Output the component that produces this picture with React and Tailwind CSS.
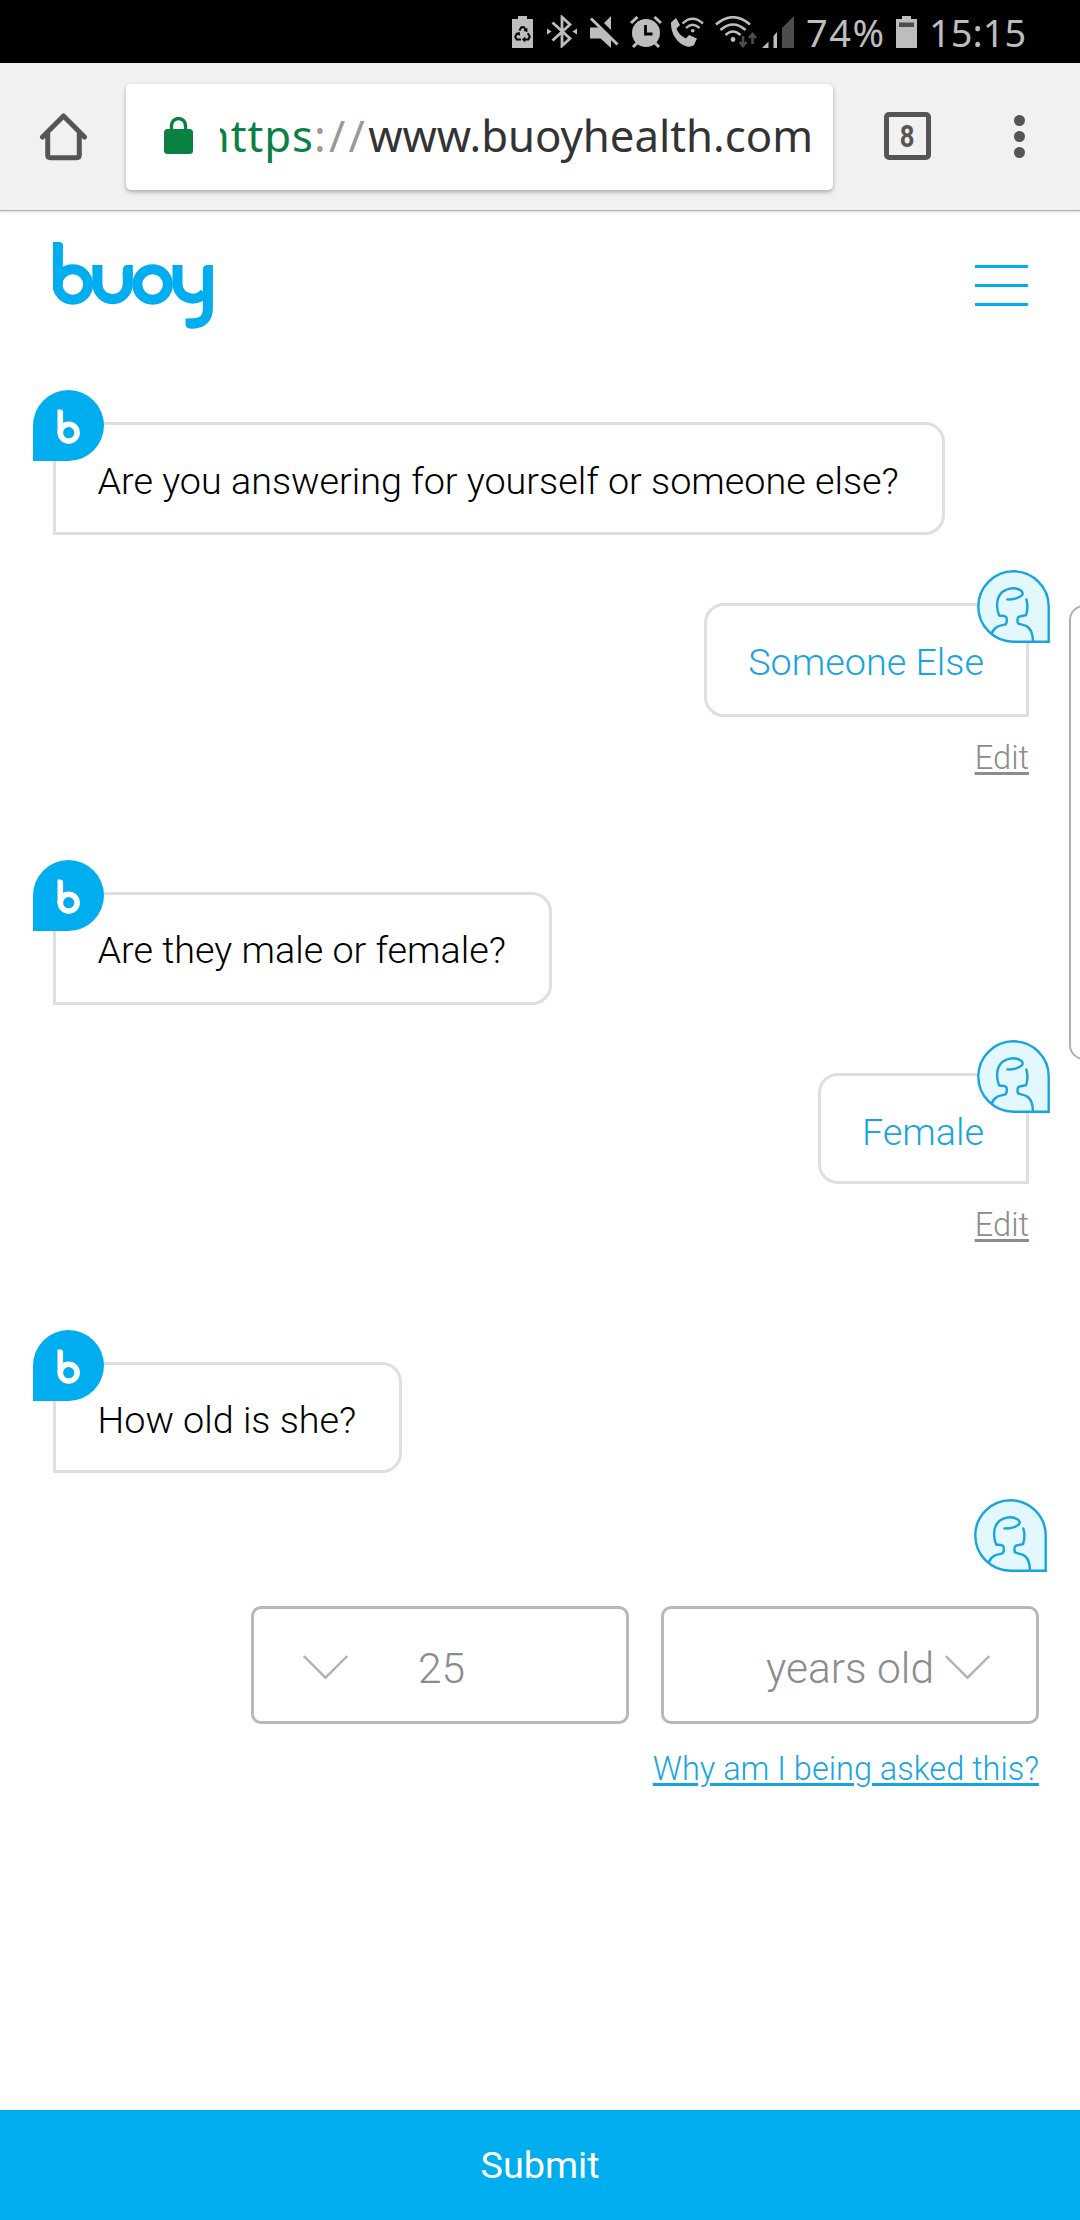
import React from "react";

const GREY = "#bdbdbd";

function BatterySaverIcon() {
  return (
    <svg className="ml-[512px] h-8 w-[21px] shrink-0" viewBox="0 0 21 32">
      <path d="M6 0h9v3h6v29H0V3h6z" fill={GREY} />
      <g fill="none" stroke="#000" strokeWidth="2">
        <path d="M7.4 14.5l2-3.2h2.6l2 3.2" />
        <path d="M15.8 17.2l2 3.6-1.5 2.7h-4" />
        <path d="M5.4 17l-2.2 3.8 1.5 2.7h4.2" />
      </g>
      <path d="M15.4 11.8v4.4l-4-1.6zM13.2 20.4v6l-3.2-3zM3 17.8l4.6-2 .6 4z" fill="#000" />
    </svg>
  );
}

function BluetoothIcon() {
  return (
    <svg className="ml-[14px] h-[33px] w-[30px] shrink-0" viewBox="0 0 30 33">
      <path d="M5.5 7.5L23 23.5l-8 7.3V2.2l8 7.3L5.5 25.5" fill="none" stroke={GREY} strokeWidth="2.8" />
      <path d="M0 13.5l4.6 3-4.6 3zM30 13.5l-4.6 3 4.6 3z" fill={GREY} />
    </svg>
  );
}

function MuteIcon() {
  return (
    <svg className="ml-[12px] h-8 w-[30px] shrink-0" viewBox="0 0 30 32">
      <path d="M1 11.5h8.5L22 23v9l-10.500-9.500H1zM22 0v14L15 7z" fill={GREY} />
      <path d="M2 2.500L28.500 28.500" stroke={GREY} strokeWidth="3" />
    </svg>
  );
}

function AlarmIcon() {
  return (
    <svg className="ml-[11px] h-8 w-8 shrink-0" viewBox="0 0 32 32">
      <circle cx="16" cy="17" r="14" fill={GREY} />
      <path d="M1 7l6.500-6M31 7L24.500 1M7 27l-4 4M25 27l4 4" stroke={GREY} strokeWidth="3" />
      <path d="M15.500 9v9h7" fill="none" stroke="#000" strokeWidth="2.800" />
    </svg>
  );
}

function WifiCallIcon() {
  return (
    <svg className="ml-[8px] h-8 w-[34px] shrink-0" viewBox="0 0 34 32">
      <path d="M1 6.500L6 2l4 7-3.500 3.500c1.500 4.500 5 8 9.500 10l3-3.500 8 3.500-3 6.500c-2 1.500-4.500 2-7 1.500C8 28 .5 18.500 1 6.500z" fill={GREY} />
      <path d="M12.500 7.500q10-9.500 20.500 0M16 12q6.500-6.500 13.500 0" fill="none" stroke={GREY} strokeWidth="2.400" />
      <circle cx="22.700" cy="14.800" r="1.800" fill={GREY} />
    </svg>
  );
}

function WifiIcon() {
  return (
    <svg className="ml-[11px] h-8 w-[43px] shrink-0" viewBox="0 0 43 32">
      <path d="M1 8.500q17-14.500 34 0M5.500 14q12.500-11 25 0M10.500 19q7.500-7 15 0" fill="none" stroke={GREY} strokeWidth="2.600" />
      <circle cx="18" cy="23.500" r="2.400" fill={GREY} />
      <path d="M28 20v10M24.500 26l3.500 4 3.500-4M37.500 28V18M34 22l3.500-4 3.500 4" fill="none" stroke="#4d4d4d" strokeWidth="2.600" />
    </svg>
  );
}

function SignalIcon() {
  return (
    <svg className="ml-[4px] h-8 w-8 shrink-0" viewBox="0 0 32 32">
      <path d="M0 32l6.500-6.500V32zM11.500 20l3.500-4v16h-3.500z" fill={GREY} />
      <path d="M20 12L32 0v32H20z" fill="#4d4d4d" />
    </svg>
  );
}

function BatteryIcon() {
  return (
    <svg className="h-8 w-[21px] shrink-0" viewBox="0 0 21 32">
      <path d="M6 0h9v3h6v29H0V3h6z" fill={GREY} />
      <path d="M3 6.500h15v4.500H3z" fill="#4d4d4d" />
    </svg>
  );
}

function StatusBar() {
  return (
    <div className="flex h-[63px] items-center bg-black font-['Noto_Sans',sans-serif] text-[38px] leading-none font-normal text-[#bdbdbd]">
      <BatterySaverIcon />
      <BluetoothIcon />
      <MuteIcon />
      <AlarmIcon />
      <WifiCallIcon />
      <WifiIcon />
      <SignalIcon />
      <span className="ml-[12px] w-[90px] shrink-0 tracking-[1.500px]">74%</span>
      <BatteryIcon />
      <span className="ml-[12px]">15:15</span>
    </div>
  );
}

function Toolbar() {
  return (
    <div className="flex h-[148px] border-b border-[#b0b0b0] bg-[#f1f1f1] pt-[21px] font-normal shadow-[0_1px_3px_rgba(0,0,0,0.15)]">
      <svg className="mt-[28px] ml-[39px] h-[49px] w-[49px] shrink-0" viewBox="0 0 49 49">
        <path d="M3.500 25L24.500 4l21 21M8.700 21v22q0 2.700 2.700 2.700h26.200q2.700 0 2.700-2.700V21" fill="none" stroke="#555" strokeWidth="5" strokeLinejoin="round" strokeLinecap="round" />
      </svg>
      <div className="ml-[38px] flex h-[106px] w-[707px] shrink-0 items-center rounded-[5px] bg-white pr-[20px] pb-1 shadow-[0_2px_4px_rgba(0,0,0,0.3)]">
        <svg className="ml-[38px] h-[38px] w-[29px] shrink-0" viewBox="0 0 29 38">
          <rect x="0" y="13" width="29" height="25" rx="3.500" fill="#0b8043" />
          <path d="M7.500 16V9.500a7 7 0 0 1 14 0V16" fill="none" stroke="#0b8043" strokeWidth="3.400" />
        </svg>
        <div className="ml-[27px] flex grow justify-end overflow-hidden font-['Noto_Sans',sans-serif] text-[43.7px] leading-[64px] whitespace-nowrap">
          <span className="tracking-[1px] text-[#0b8043]">https</span>
          <span className="tracking-[3.3px] text-[#999]">://</span>
          <span className="text-[#333]">www.buoyhealth.com</span>
        </div>
      </div>
      <div className="mt-[28px] ml-[51px] flex h-[48px] w-[47px] shrink-0 items-center justify-center rounded-[5px] border-[5px] border-[#555] font-['Roboto',sans-serif] text-[32px] leading-none font-bold text-[#555]">
        <span className="scale-x-[0.8]">8</span>
      </div>
      <div className="mt-[31px] ml-[83px] flex flex-col gap-[5px]">
        <span className="size-[11px] rounded-full bg-[#555]" />
        <span className="size-[11px] rounded-full bg-[#555]" />
        <span className="size-[11px] rounded-full bg-[#555]" />
      </div>
    </div>
  );
}

function BuoyLogo() {
  return (
    <svg className="mt-[31px] h-[87px] w-[160px]" viewBox="0 0 160 87" fill="none" stroke="#00aef0" strokeWidth="10">
      <circle cx="19.800" cy="42.500" r="15.300" />
      <path d="M4.900 42.500V5" />
      <path d="M0 0h6q4 0 4 4v4H0z" fill="#00aef0" stroke="none" />
      <path d="M44.400 23v19a15.200 15.200 0 0 0 30.400 0V30" />
      <path d="M69.800 34v-6q0-5 5-5h5v11z" fill="#00aef0" stroke="none" />
      <circle cx="99.600" cy="42.500" r="15.300" />
      <path d="M124.500 23v19a15.200 15.200 0 0 0 27 9M154.900 30v36q0 15.500-16 15.500h-2" />
      <path d="M149.900 34v-6q0-5 5-5h5v11zM132.500 76.500h10v10h-5q-5 0-5-5z" fill="#00aef0" stroke="none" />
    </svg>
  );
}

function BotAvatar() {
  return (
    <svg className="absolute -top-[35px] -left-[23px] size-[71px]" viewBox="0 0 71 71">
      <path d="M0 71V35.500A35.500 35.500 0 1 1 35.500 71z" fill="#00aef0" />
      <circle cx="35.700" cy="42.700" r="8.400" fill="none" stroke="#fff" strokeWidth="5.600" />
      <path d="M24.500 43V19.500h2.600q3 0 3 3V43z" fill="#fff" />
    </svg>
  );
}

function UserAvatar({ className }) {
  return (
    <svg className={className} viewBox="0 0 73 73" fill="none" stroke="#18a5df" strokeWidth="2.400" strokeLinecap="round">
      <path d="M71.700 71.700V36.500A35.200 35.200 0 1 0 36.500 71.700z" fill="#e3f7fe" />
      <path d="M30.300 29.400c5 .3 11-1 14.500-4 1.500-1.500 1-3.500-1-4.800-3.500-2.300-7-2.800-10.800-2C23.500 20.500 20 27 20.100 36c.1 3 .8 6.500 2 9.300 2.300 1 5-.2 7.200 1.800.8 2 .7 5-.6 7.200-1.700 1-5 .6-8 2.200-3 1.700-5 4-6 7" />
      <path d="M49.300 29.400c1.500 5 1.300 11-.2 15.800-2.500.8-6 .3-8 2.200-.8 2-.8 4.500.3 6.300 3 .9 6.500.8 9.500 3.300 3.500 3 5 8.500 5 14" />
    </svg>
  );
}

function BotMessage({ className, children }) {
  return (
    <div className={`relative ml-[53px] flex items-center self-start rounded-[20px] rounded-bl-none border-[3px] border-[#dfdfdf] pr-[43px] pl-[41.500px] text-black ${className}`}>
      <BotAvatar />
      {children}
    </div>
  );
}

function UserMessage({ className, children }) {
  return (
    <div className={`relative mr-[51px] flex items-center self-end rounded-[20px] rounded-br-none border-[3px] border-[#dfdfdf] pr-[42px] pl-[41px] text-[#18a5df] ${className}`}>
      {children}
      <UserAvatar className="absolute -top-[36px] -right-[24px] size-[73px]" />
    </div>
  );
}

function EditLink({ className }) {
  return (
    <a className={`mr-[51px] h-10 self-end text-[32.7px] leading-10 text-[#8c8c8c] underline decoration-[2.500px] underline-offset-[3px] ${className}`}>
      Edit
    </a>
  );
}

function Chevron({ className }) {
  return (
    <svg className={`h-[25px] w-[45px] shrink-0 ${className}`} viewBox="0 0 45 25" fill="none" stroke="#b3b3b3" strokeWidth="2.400">
      <path d="M.8 1l21.700 21.700L44.200 1" />
    </svg>
  );
}

export default function App() {
  return (
    <div className="relative flex h-[2220px] w-[1080px] flex-col overflow-hidden bg-white font-['Roboto',sans-serif] text-[37.75px] font-light">
      <StatusBar />
      <Toolbar />

      <header className="flex h-[171px] shrink-0 items-start justify-between pr-[52px] pl-[53px]">
        <BuoyLogo />
        <div className="mt-[54px] flex w-[53px] flex-col gap-[16px]">
          <span className="h-[3px] bg-[#00aef0]" />
          <span className="h-[3px] bg-[#00aef0]" />
          <span className="h-[3px] bg-[#00aef0]" />
        </div>
      </header>

      <main className="flex grow flex-col">
        <BotMessage className="mt-[40px] h-[113px] pt-[5px]">Are you answering for yourself or someone else?</BotMessage>
        <UserMessage className="mt-[68px] h-[114px] pt-[4px]">Someone Else</UserMessage>
        <EditLink className="mt-[21px]" />
        <BotMessage className="mt-[114px] h-[113px] pt-[4px]">Are they male or female?</BotMessage>
        <UserMessage className="mt-[68px] h-[111px] pt-[7px]">Female</UserMessage>
        <EditLink className="mt-[21px]" />
        <BotMessage className="mt-[117px] h-[111px] pt-[6px]">How old is she?</BotMessage>

        <UserAvatar className="mt-[26px] mr-[33px] size-[73px] self-end" />

        <div className="mt-[34px] mr-[41px] flex gap-[32px] self-end text-[42.500px] text-[#8c8c8c]">
          <div className="flex h-[118px] w-[378px] items-center rounded-[10px] border-[3px] border-[#b8b8b8] pt-[5px]">
            <Chevron className="ml-[49px]" />
            <span className="mt-[3px] ml-[70px]">25</span>
          </div>
          <div className="flex h-[118px] w-[378px] items-center justify-end rounded-[10px] border-[3px] border-[#b8b8b8] pt-[5px]">
            <span className="mt-[3px]">years old</span>
            <Chevron className="mr-[46px] ml-[11px]" />
          </div>
        </div>

        <a className="mt-[25px] mr-[41px] h-10 self-end text-[32.500px] leading-10 text-[#18a5df] underline decoration-[2.500px] underline-offset-[3px]">
          Why am I being asked this?
        </a>
      </main>

      <button className="flex h-[110px] shrink-0 items-center justify-center bg-[#00aef0] font-normal text-white">Submit</button>

      <div className="absolute top-[605px] left-[1069px] h-[455px] w-[30px] rounded-[15px] border-2 border-[#b0b0b0]" />
    </div>
  );
}
